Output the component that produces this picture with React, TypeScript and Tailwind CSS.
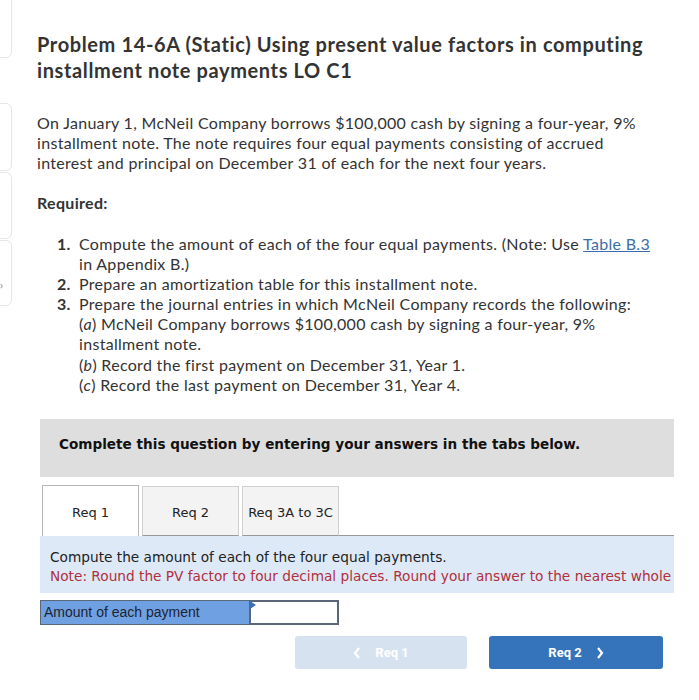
import React from "react";

const sans = { fontFamily: "Lato, 'Open Sans', sans-serif" };

export default function App() {
  return (
    <div className="relative w-[699px] h-[700px] bg-white overflow-hidden text-[#333]">
      {/* left edge cards */}
      <div className="absolute left-[-10px] top-[-10px] w-[22px] h-[68px] border border-[#e6e6e6] rounded-[6px] bg-white" />
      <div className="absolute left-[-10px] top-[103px] w-[22px] h-[68px] border border-[#e6e6e6] rounded-[6px] bg-white" />
      <div className="absolute left-[-10px] top-[172px] w-[22px] h-[67px] border border-[#e6e6e6] rounded-[6px] bg-white" />
      <div className="absolute left-[-10px] top-[240px] w-[22px] h-[66px] border border-[#e6e6e6] rounded-[6px] bg-white" />
      <div className="absolute left-[0px] top-[280px] text-[10px] text-[#999] leading-none">›</div>

      <div className="pl-[37px] pt-[31px]" style={sans}>
        <h1 className="text-[20px] font-bold leading-[26px] tracking-[0.62px] text-[#333]">
          <span className="block whitespace-nowrap">Problem 14-6A (Static) Using present value factors in computing</span>
          <span className="block whitespace-nowrap">installment note payments LO C1</span>
        </h1>
        <div className="tracking-[0.31px]">
          <p className="mt-[30px] text-[16px] leading-[20px]">
            <span className="block whitespace-nowrap">On January 1, McNeil Company borrows $100,000 cash by signing a four-year, 9%</span>
            <span className="block whitespace-nowrap">installment note. The note requires four equal payments consisting of accrued</span>
            <span className="block whitespace-nowrap">interest and principal on December 31 of each for the next four years.</span>
          </p>
          <p className="mt-[20px] text-[16px] leading-[20px] font-bold">Required:</p>
          <ol className="mt-[21px] pl-[20px] text-[16px] leading-[20px]">
            <li className="flex">
              <span className="w-[22px] font-bold">1.</span>
              <span>
                <span className="block whitespace-nowrap">
                  Compute the amount of each of the four equal payments. (Note: Use{" "}
                  <span className="text-[#3b6ea8] underline">Table B.3</span>
                </span>
                <span className="block whitespace-nowrap">in Appendix B.)</span>
              </span>
            </li>
            <li className="flex">
              <span className="w-[22px] font-bold">2.</span>
              <span className="whitespace-nowrap">Prepare an amortization table for this installment note.</span>
            </li>
            <li className="flex">
              <span className="w-[22px] font-bold">3.</span>
              <span>
                <span className="block whitespace-nowrap">Prepare the journal entries in which McNeil Company records the following:</span>
                <span className="block whitespace-nowrap">
                  (<i>a</i>) McNeil Company borrows $100,000 cash by signing a four-year, 9%
                </span>
                <span className="block whitespace-nowrap">installment note.</span>
                <span className="block whitespace-nowrap mt-[1px]">(<i>b</i>) Record the first payment on December 31, Year 1.</span>
                <span className="block whitespace-nowrap">(<i>c</i>) Record the last payment on December 31, Year 4.</span>
              </span>
            </li>
          </ol>
        </div>
      </div>

      <div
        className="ml-[40px] mt-[24px] w-[634px]"
        style={{ fontFamily: "Verdana, 'DejaVu Sans', sans-serif" }}
      >
        <div className="h-[58px] bg-[#dedede] flex items-center pl-[19px] pb-[8px]">
          <span className="text-[13.6px] font-bold text-[#111]">
            Complete this question by entering your answers in the tabs below.
          </span>
        </div>
        <div className="mt-[8px] flex items-end">
          <div className="ml-[2px] w-[97px] h-[51px] pt-[3px] bg-white border border-[#b5b5b5] border-b-0 flex items-center justify-center text-[13px] text-[#222]">
            Req 1
          </div>
          <div className="ml-[3px] w-[97px] h-[50px] pt-[3px] bg-[#f3f3f3] border border-[#d0d0d0] border-b-[#999] flex items-center justify-center text-[13px] text-[#222]">
            Req 2
          </div>
          <div className="ml-[3px] w-[97px] h-[50px] pt-[3px] bg-[#f3f3f3] border border-[#d0d0d0] border-b-[#999] flex items-center justify-center text-[13px] text-[#222]">
            Req 3A to 3C
          </div>
          <div className="flex-1 h-[2px] border-b border-[#999]" />
        </div>
        <div className="h-[57px] bg-[#dde9f7] pl-[10px] pt-[12px] text-[13.7px] leading-[19px] whitespace-nowrap overflow-hidden">
          <div className="text-[#222]">Compute the amount of each of the four equal payments.</div>
          <div className="text-[#b0303c]">
            Note: Round the PV factor to four decimal places. Round your answer to the nearest whole dollar.
          </div>
        </div>
        <div className="mt-[7px] flex h-[25px]" style={{ fontFamily: "'Liberation Sans', Arial, sans-serif" }}>
          <div className="w-[209px] bg-[#6fa1e2] border border-[#5a6778] border-r-0 flex items-center pl-[3px] text-[14px] text-[#1d2330]">
            Amount of each payment
          </div>
          <div className="relative w-[90px] bg-white border-2 border-[#5a6778]">
            <div className="absolute left-[-1px] top-[-1px] w-0 h-0 border-t-[4px] border-b-[4px] border-l-[6px] border-t-transparent border-b-transparent border-l-[#3c6fb5]" />
          </div>
        </div>
      </div>

      <div className="absolute left-[295px] top-[636px] flex gap-[22px]" style={{ fontFamily: "Roboto, 'Open Sans', sans-serif" }}>
        <div className="w-[172px] h-[33px] rounded-[3px] bg-[#d7e2f0] flex items-center justify-center gap-[14px] text-white text-[13px] font-bold">
          <svg width="8" height="12" viewBox="0 0 8 12"><path d="M6 1 L2 6 L6 11" stroke="#fff" strokeWidth="2.2" fill="none" /></svg>
          <span>Req 1</span>
        </div>
        <div className="w-[174px] h-[33px] rounded-[3px] bg-[#3573ba] flex items-center justify-center gap-[14px] text-white text-[13px] font-bold">
          <span>Req 2</span>
          <svg width="8" height="12" viewBox="0 0 8 12"><path d="M2 1 L6 6 L2 11" stroke="#fff" strokeWidth="2.2" fill="none" /></svg>
        </div>
      </div>
    </div>
  );
}
